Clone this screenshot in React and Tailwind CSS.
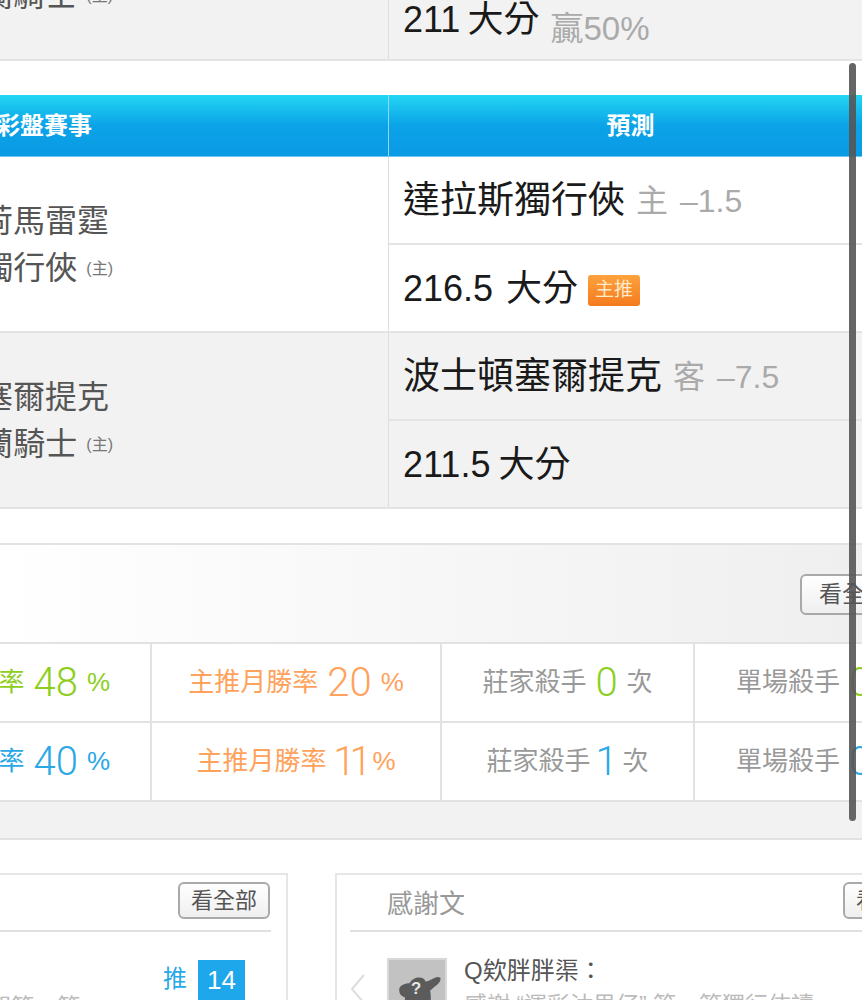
const FF = { fontFamily: '"Liberation Sans","Noto Sans CJK TC",sans-serif' };

function Names({ a, b }) {
  return (
    <div className="w-[113px] pt-[2px] flex flex-col items-end text-[32px] leading-[47px] text-[#555] whitespace-nowrap">
      {a && <div className="w-[109px] mr-[4px] flex justify-end">{a}</div>}
      <div className="flex items-center justify-end">
        {b}
        <span className="ml-[9px] text-[16px] text-[#777]">(主)</span>
      </div>
    </div>
  );
}

function Pick({ children, h, bottom }) {
  return (
    <div className={`${h} flex items-center pl-[14px] pt-[2px] whitespace-nowrap ${bottom ? 'border-b-2 border-[#e4e4e4]' : ''}`}>
      {children}
    </div>
  );
}

function Main({ children }) {
  return <span className="text-[37px] text-[#1a1a1a]">{children}</span>;
}

function Total({ value, after = 'ml-[13px]' }) {
  return (
    <span className="flex items-center text-[#1a1a1a]">
      <span className="text-[36px]">{value}</span>
      <span className={`text-[36px] ${after}`}>大分</span>
    </span>
  );
}

function Side({ who, line }) {
  return (
    <span className="flex items-center ml-[11px] text-[32px] text-[#aaa]">
      <span>{who}</span>
      <span className="ml-[12px]">{line}</span>
    </span>
  );
}

function Num({ num, color }) {
  const width = num === '11' ? 'w-[28px] tracking-[-6px]' : num === '1' ? 'w-[14px]' : '';
  return (
    <span
      className={`mx-[9px] text-[40px] font-light flex justify-center ${color} ${width}`}
      style={{ fontFamily: 'Roboto,sans-serif' }}
    >
      {num}
    </span>
  );
}

function GameRow({ a, b, top, bot, bg }) {
  return (
    <div className={`h-[176px] flex border-b-2 border-[#e4e4e4] ${bg}`}>
      <div className="w-[389px] shrink-0 border-r border-[#dedede] flex items-center">
        <Names a={a} b={b} />
      </div>
      <div className="flex-1 flex flex-col">
        <Pick h="h-[88px]" bottom>{top}</Pick>
        <Pick h="h-[86px]">{bot}</Pick>
      </div>
    </div>
  );
}

function StatRow({ color, first, m, k, kill }) {
  return (
    <div className="h-[79px] grid grid-cols-[152px_290px_253px_1fr] border-b-2 border-[#e2e2e2] bg-white overflow-hidden text-[26px] whitespace-nowrap">
      <div className="flex items-center justify-end pr-[40px] border-r-2 border-[#e2e2e2]">
        <span className={color}>率</span>
        <Num num={first} color={color} />
        <span className={color}>%</span>
      </div>
      <div className="flex items-center justify-center border-r-2 border-[#e2e2e2]">
        <span className="text-[#ffa25c]">主推月勝率</span>
        <Num num={m} color="text-[#ffa25c]" />
        <span className="text-[#ffa25c]">%</span>
      </div>
      <div className="flex items-center justify-center border-r-2 border-[#e2e2e2]">
        <span className="text-[#999]">莊家殺手</span>
        <Num num={k} color={color} />
        <span className="text-[#999]">次</span>
      </div>
      <div className="flex items-center pl-[41px]">
        <span className="text-[#999]">單場殺手</span>
        <Num num={kill} color={color} />
      </div>
    </div>
  );
}

function SeeAll({ extra }) {
  return (
    <div className={`shrink-0 border-2 border-[#a9a9a9] rounded-[6px] bg-gradient-to-b from-white to-[#efefef] flex items-center text-[#555] whitespace-nowrap ${extra}`}>
      看全部
    </div>
  );
}

export default function App() {
  return (
    <div className="relative w-[862px] h-[1000px] overflow-hidden bg-white" style={FF}>
      {/* previous table tail */}
      <div className="h-[61px] flex bg-[#f2f2f2] border-b-2 border-[#e4e4e4]">
        <div className="w-[389px] shrink-0 border-r border-[#dedede]">
          <div className="-mt-[30px]"><Names b="蘭騎士" /></div>
        </div>
        <div className="flex-1 pl-[14px] -mt-[7px] whitespace-nowrap flex items-start">
          <Total value="211" after="ml-[7px]" />
          <span className="ml-[11px] mt-[11px] text-[33px] text-[#aaa]">贏50%</span>
        </div>
      </div>

      <div className="h-[34px]" />

      {/* table head */}
      <div className="h-[62px] flex text-white text-[24px] font-bold bg-[linear-gradient(to_bottom,#23d6f3_0%,#0ba3e8_50%,#0a9ae4_100%)] border-b border-[#6cc8f2]">
        <div className="w-[389px] shrink-0 border-r border-[#8fd9f5] flex items-center">
          <div className="w-[92px] flex justify-end whitespace-nowrap">運彩盤賽事</div>
        </div>
        <div className="flex-1 flex items-center justify-center pl-[10px]">預測</div>
      </div>

      <GameRow
        bg="bg-white"
        a="奧克拉荷馬雷霆"
        b="達拉斯獨行俠"
        top={<><Main>達拉斯獨行俠</Main><Side who="主" line="–1.5" /></>}
        bot={
          <>
            <Total value="216.5" />
            <span className="ml-[10px] mt-[2px] w-[52px] h-[31px] rounded-[3px] bg-gradient-to-b from-[#fda23c] to-[#f47a1c] text-[#ffe9c9] text-[19px] flex items-center justify-center">主推</span>
          </>
        }
      />
      <GameRow
        bg="bg-[#f2f2f2]"
        a="波士頓塞爾提克"
        b="克里夫蘭騎士"
        top={<><Main>波士頓塞爾提克</Main><Side who="客" line="–7.5" /></>}
        bot={<Total value="211.5" after="ml-[8px]" />}
      />

      <div className="h-[34px]" />

      {/* stats panel */}
      <div className="h-[101px] border-t-2 border-[#e2e2e2] border-b-2 bg-gradient-to-r from-white to-[#efefef] flex items-center pl-[800px] overflow-hidden">
        <SeeAll extra="w-[92px] h-[41px] pl-[17px] text-[23px] mt-[1px]" />
      </div>
      <StatRow color="text-[#8ccf1e]" first="48" m="20" k="0" kill="0" />
      <StatRow color="text-[#2aa8e6]" first="40" m="11" k="1" kill="0" />
      <div className="h-[38px] bg-[#f2f2f2] border-b-2 border-[#e2e2e2]" />

      <div className="h-[33px]" />

      {/* lower panels */}
      <div className="flex h-[127px] items-start">
        <div className="w-[288px] shrink-0 h-[200px] border-t-2 border-r-2 border-[#e6e6e6] pr-[15px]">
          <div className="h-[57px] pt-[7px] flex justify-end border-b-2 border-[#e0e0e0]">
            <SeeAll extra="w-[92px] h-[37px] pl-[11px] text-[22px] mr-[1px]" />
          </div>
          <div className="flex justify-end items-start gap-[11px] pt-[28px] pr-[26px]">
            <span className="text-[24px] leading-[38px] text-[#2aa8e6] whitespace-nowrap">推</span>
            <div className="w-[47px] h-[60px] bg-[#1ea7ea] text-white text-[26px] leading-[40px] text-center">14</div>
          </div>
          <div className="-mt-[30px] text-[23px] text-[#bbb] whitespace-nowrap">
            <span className="ml-[-12px]">問等．等</span>
          </div>
        </div>
        <div className="ml-[47px] flex-1 min-w-0 h-[200px] border-t-2 border-l-2 border-[#e6e6e6] pl-[13px]">
          <div className="h-[57px] border-b-2 border-[#e0e0e0] flex items-start justify-between">
            <span className="ml-[37px] mt-[10px] text-[26px] text-[#999]">感謝文</span>
            <SeeAll extra="w-[92px] h-[37px] pl-[11px] text-[22px] mt-[7px] -mr-[73px]" />
          </div>
          <div className="flex items-start pt-[26px]">
            <svg className="mt-[16px] w-[16px] h-[30px] shrink-0" viewBox="0 0 16 30" fill="none" stroke="#dddddd" strokeWidth="2"><path d="M14 1 L2 15 L14 29" /></svg>
            <div className="ml-[21px] w-[60px] h-[60px] shrink-0 bg-[#c2c2c2] border-2 border-[#d8d8d8]">
              <svg viewBox="0 0 60 60" className="w-full h-full">
                <path d="M11 33 C10 27 18 25 22 25 C26 17 38 17 39 23 C45 23 50 16 55 19 C57 24 48 29 44 33 C46 40 44 50 42 60 L14 60 C12 52 18 46 17 40 C14 39 11 37 11 33 Z" fill="#5b5b5b" />
                <text x="29" y="36" fill="#e6e6e6" fontSize="18" fontWeight="bold" textAnchor="middle">?</text>
              </svg>
            </div>
            <div className="ml-[17px] whitespace-nowrap">
              <div className="text-[24px] leading-[28px] text-[#555] -mt-[1px]">Q欸胖胖渠：</div>
              <div className="text-[23px] leading-[28px] text-[#bbb] mt-[6px]">感謝 “運彩沽男仔” 等．等獨行俠讀</div>
            </div>
          </div>
        </div>
      </div>

      {/* overlay scrollbar */}
      <div className="absolute left-[849px] top-[63px] w-[7px] h-[758px] rounded-full bg-[#555]/90" />
    </div>
  );
}
